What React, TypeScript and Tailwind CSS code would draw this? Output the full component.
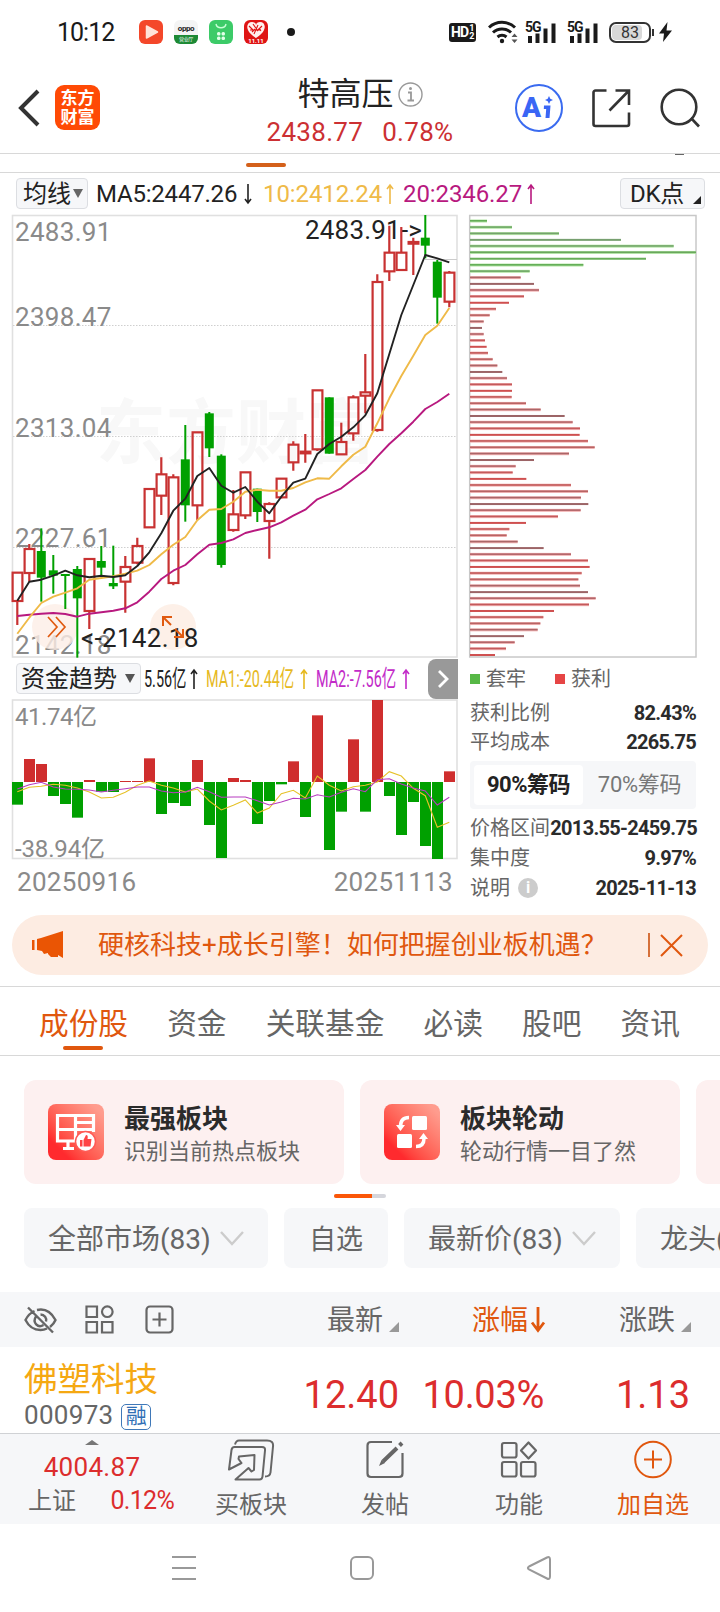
import type { ReactNode } from "react";
import { clsx } from "clsx";

// kind, body top, body bottom, wick top, wick bottom (in thirds of a pixel)
type Candle = ["r" | "g", number, number, number, number];

const CANDLES: Candle[] = [
  ["r", 1103, 1188, 1103, 1260],
  ["r", 1032, 1104, 1017, 1130],
  ["g", 1038, 1118, 970, 1190],
  ["g", 1096, 1112, 1050, 1166],
  ["g", 1107, 1112, 1107, 1212],
  ["g", 1092, 1180, 1083, 1358],
  ["r", 1062, 1218, 1062, 1272],
  ["g", 1068, 1088, 1023, 1112],
  ["g", 1134, 1144, 1022, 1152],
  ["r", 1086, 1130, 1053, 1223],
  ["r", 1023, 1073, 998, 1078],
  ["r", 852, 967, 852, 967],
  ["r", 808, 872, 757, 930],
  ["r", 817, 1134, 808, 1141],
  ["g", 763, 901, 660, 950],
  ["r", 682, 901, 682, 945],
  ["g", 625, 730, 621, 756],
  ["g", 752, 1080, 748, 1088],
  ["r", 928, 975, 855, 980],
  ["r", 802, 931, 802, 942],
  ["g", 851, 921, 851, 951],
  ["r", 897, 948, 892, 1061],
  ["r", 821, 877, 821, 880],
  ["r", 719, 772, 709, 797],
  ["r", 740, 745, 687, 773],
  ["r", 556, 733, 556, 738],
  ["g", 577, 746, 577, 746],
  ["r", 711, 748, 653, 748],
  ["r", 577, 685, 571, 707],
  ["r", 562, 572, 447, 625],
  ["r", 231, 675, 208, 680],
  ["r", 143, 199, 62, 228],
  ["r", 143, 195, 66, 195],
  ["r", 111, 116, 98, 210],
  ["g", 98, 122, 30, 160],
  ["g", 170, 278, 165, 356],
  ["r", 203, 290, 198, 307],
];

const MA5 = [1187, 1130, 1124, 1112, 1097, 1111, 1117, 1112, 1116, 1111, 1083, 1042, 985, 917, 881, 813, 789, 842, 863, 846, 890, 925, 875, 833, 821, 747, 717, 695, 667, 631, 565, 447, 330, 240, 150, 160, 172];
const MA10 = [1286, 1238, 1194, 1175, 1163, 1150, 1124, 1119, 1114, 1106, 1097, 1080, 1048, 1019, 996, 946, 914, 912, 890, 860, 854, 857, 857, 849, 832, 820, 821, 784, 749, 725, 655, 580, 513, 452, 390, 362, 309];
const MA20 = [1233, 1229, 1226, 1224, 1227, 1235, 1226, 1222, 1217, 1210, 1192, 1160, 1122, 1097, 1080, 1048, 1019, 1014, 1003, 984, 975, 967, 952, 932, 914, 883, 867, 850, 822, 795, 755, 717, 685, 650, 612, 591, 566];

const FLOW = [449, 312, 327, 423, 447, 488, 375, 410, 411, 378, 378, 310, 477, 444, 453, 315, 510, 609, 369, 375, 507, 438, 388, 319, 486, 181, 585, 470, 253, 470, 135, 423, 540, 441, 573, 612, 349];
const FLOW_MA1 = [410, 397, 394, 388, 391, 399, 411, 429, 427, 412, 391, 378, 391, 399, 411, 402, 438, 465, 451, 435, 474, 459, 416, 406, 429, 363, 391, 408, 395, 391, 381, 350, 363, 400, 422, 517, 502];
const FLOW_MA2 = [402, 389, 382, 396, 402, 403, 405, 411, 406, 401, 396, 396, 408, 413, 411, 397, 410, 427, 426, 426, 437, 450, 441, 430, 432, 419, 426, 412, 401, 410, 374, 371, 387, 399, 408, 450, 427];

const CHIPS = [81, 156, 297, 483, 641, 708, 558, 370, 209, 182, 222, 237, 192, 147, 108, 89, 71, 66, 71, 75, 80, 84, 98, 112, 127, 141, 156, 156, 155, 198, 242, 314, 338, 360, 359, 384, 404, 327, 222, 167, 158, 199, 333, 384, 363, 385, 362, 294, 198, 148, 140, 173, 251, 333, 384, 389, 365, 355, 360, 384, 407, 387, 282, 250, 241, 233, 192, 164, 138, 105];
const CHIP_REDS = ["#c25a5a", "#b86464", "#ab6668", "#9c6466", "#b3666a", "#c45a5c", "#cf5050"];
const CHIP_GREENS = ["#63ad57", "#6fa866", "#74a36c", "#77a070", "#72a669", "#6aa75d", "#66ad58"];

const RED = "#c83232";
const GREEN = "#00a000";

const cx = (i: number) => 17.3 + i * 12;
const ky = (v: number) => v / 3 - 9;
const fy = (v: number) => v / 3 - 44;
const points = (values: number[], y: (v: number) => number) =>
  values.map((v, i) => `${cx(i).toFixed(1)},${y(v).toFixed(1)}`).join(" ");

function KLineChart() {
  return (
    <svg width="460" height="444" viewBox="0 0 460 444" className="block" fontSize="26">
      <text x="96" y="244" fontSize="70" fontWeight="700" fill="#f8f8f8">东方财富</text>
      <rect x="12.5" y="1.5" width="444.5" height="441.5" fill="none" stroke="#e0e0e0" strokeWidth="1.6" />
      {[111.5, 222.5, 333.5].map((y) => (
        <line key={y} x1="13" x2="457" y1={y} y2={y} stroke="#cfcfcf" strokeDasharray="1.5 1.5" />
      ))}
      <line x1="425" x2="457" y1="45.5" y2="45.5" stroke="#ccc" />
      <g fill="#8a8a8a" letterSpacing="0.3">
        <text x="15" y="27">2483.91</text>
        <text x="15" y="112">2398.47</text>
        <text x="15" y="223">2313.04</text>
        <text x="15" y="333">2227.61</text>
        <text x="15" y="440">2142.18</text>
      </g>
      <circle cx="55" cy="413" r="23" fill="#fdeee6" fillOpacity="0.8" />
      <circle cx="173" cy="413" r="23" fill="#fdeee6" fillOpacity="0.9" />
      <text x="305" y="25" fill="#222" letterSpacing="0.2">2483.91-&gt;</text>
      <text x="81" y="432.5" fill="#222" letterSpacing="0.3">&lt;-2142.18</text>
      {CANDLES.map(([kind, top, bottom, high, low], i) => {
        const x = cx(i);
        if (kind === "g") {
          return (
            <g key={i} fill={GREEN}>
              <rect x={x - 1} y={ky(high)} width="2" height={(low - high) / 3} />
              <rect x={x - 4.5} y={ky(top)} width="9" height={Math.max(2, (bottom - top) / 3)} />
            </g>
          );
        }
        return (
          <g key={i} stroke={RED} strokeWidth="2.2">
            <path d={`M${x} ${ky(high)}V${ky(top)}M${x} ${ky(bottom)}V${ky(low)}`} />
            <rect x={x - 4.7} y={ky(top)} width="9.8" height={(bottom - top) / 3} fill="none" />
          </g>
        );
      })}
      <g fill="none" strokeWidth="1.9" strokeLinejoin="round">
        <polyline points={points(MA20, ky)} stroke="#b8197f" />
        <polyline points={points(MA10, ky)} stroke="#efba48" />
        <polyline points={points(MA5, ky)} stroke="#222" />
      </g>
      <path d="M48 403l9 10-9 10M56 403l9 10-9 10" fill="none" stroke="#e05a10" strokeWidth="1.7" />
      <path d="M163 412v-9h9M163 403l8 8M183 415v8h-9M183 423l-8-8" fill="none" stroke="#e05a10" strokeWidth="2" />
    </svg>
  );
}

function FlowChart() {
  const zero = fy(381);
  return (
    <svg width="460" height="161" viewBox="0 0 460 161" className="block" fontSize="24">
      <rect x="12.5" y="1" width="444.5" height="158.5" fill="none" stroke="#e0e0e0" strokeWidth="1.6" />
      <g fill="#8a8a8a">
        <text x="15" y="26" textLength="82">41.74亿</text>
        <text x="15" y="158" textLength="90">-38.94亿</text>
      </g>
      {FLOW.map((v, i) => (
        <rect
          key={i}
          x={12 + i * 12}
          y={Math.min(zero, fy(v))}
          width="11"
          height={Math.max(1, Math.abs(fy(v) - zero))}
          fill={v < 381 ? "#cf2e2e" : GREEN}
        />
      ))}
      <polyline points={points(FLOW_MA1, fy)} fill="none" stroke="#e6c229" strokeWidth="1.1" />
      <polyline points={points(FLOW_MA2, fy)} fill="none" stroke="#b73cc0" strokeWidth="1.1" />
    </svg>
  );
}

function ChipChart() {
  return (
    <svg width="230" height="444" viewBox="0 0 230 444" className="block">
      <rect x="1.7" y="1.5" width="226.3" height="441.5" fill="none" stroke="#c8c8c8" strokeWidth="1.5" />
      {CHIPS.map((v, i) => {
        const y = 7 + i * 6.29;
        const w = (v - 30) / 3;
        const green = i < 9;
        const plain = i % 7 === 3 || i % 7 === 6;
        return (
          <g key={i}>
            {!plain && <rect x="2" y={y - 1.5} width={w} height="3" fill={green ? "#b6e6a8" : "#f3b4b4"} />}
            <rect x="2" y={y - 1} width={w} height={plain ? 2 : 1.6} fill={(green ? CHIP_GREENS : CHIP_REDS)[i % 7]} />
          </g>
        );
      })}
    </svg>
  );
}

function VArrow({ down, className }: { down?: boolean; className?: string }) {
  return (
    <svg width="10" height="22" viewBox="0 0 10 22" fill="none" stroke="currentColor" strokeWidth="1.6" className={clsx("shrink-0", className)}>
      <path d={down ? "M5 1v19M2 16l3 4 3-4" : "M5 21V2M2 6l3-4 3 4"} />
    </svg>
  );
}

function Signal() {
  return (
    <div className="relative w-[31px] h-[23px]">
      <span className="absolute left-0 -top-[1px] text-[14px] leading-none font-bold tracking-[-1px]">5G</span>
      <svg width="31" height="23" viewBox="0 0 31 23" fill="#1a1a1a">
        <path d="M3 15h4v7H3zM10.500 12.500h4v9.500h-4zM18.500 7.500h4v14.500h-4zM26.500 2.500h4v19.500h-4z" />
      </svg>
    </div>
  );
}

function StatusBar() {
  return (
    <div className="h-[62px] flex items-center text-[#1a1a1a] pt-0.5">
      <span className="ml-[57px] w-[82px] text-[25px] leading-none tracking-[-1px]">10:12</span>
      <div className="flex gap-[11px]">
        <svg width="24" height="24" viewBox="0 0 24 24">
          <rect width="24" height="24" rx="6" fill="#f4472a" />
          <path d="M7.500 6v12l11-6z" fill="#ffe3da" stroke="#ffe3da" strokeWidth="1.5" strokeLinejoin="round" />
        </svg>
        <div className="w-6 h-6 rounded-md overflow-hidden bg-[#f4f4f4] flex flex-col justify-between text-center">
          <span className="mt-[5px] text-[8px] leading-none font-bold tracking-tighter text-[#222]">oppo</span>
          <span className="h-[9px] bg-[#1d8a35] text-white text-[5px] leading-[9px] tracking-[-0.3px] whitespace-nowrap">营业厅</span>
        </div>
        <svg width="24" height="24" viewBox="0 0 24 24">
          <rect width="24" height="24" rx="6" fill="#3ccb68" />
          <path d="M7 4c1 5 9 5 10 0" fill="none" stroke="#c8ffd6" strokeWidth="1.4" />
          <g fill="#e2ffe9">
            <rect x="8" y="12" width="3.5" height="3.5" rx="1.5" />
            <rect x="12.5" y="12" width="3.5" height="3.5" rx="1.5" />
            <rect x="8" y="16.5" width="3.5" height="3.5" rx="1.5" />
            <rect x="12.5" y="16.5" width="3.5" height="3.5" rx="1.5" />
          </g>
        </svg>
        <div className="relative w-6 h-6 rounded-md overflow-hidden bg-[#df1414]">
          <svg width="24" height="24" viewBox="0 0 24 24">
            <path d="M12 18C0 11 2 2 8 2c2 0 4 1 4 3 0-2 2-3 4-3 6 0 8 9-4 16z" fill="#fff0ee" />
            <path d="M5 6l4 4M9 4l5 7M14 5l-4 9M18 6l-5 5M6 10h11M8 12l3-3M15 8l2 3" stroke="#df1414" strokeWidth="1.1" />
          </svg>
          <span className="absolute inset-x-0 bottom-0 text-[6px] leading-none text-white text-center font-bold">11.11</span>
        </div>
      </div>
      <span className="ml-[19px] w-2 h-2 rounded-full bg-[#1a1a1a]" />
      <div className="ml-auto mr-[48px] flex items-center">
        <div className="w-[27px] h-[19px] rounded-[3px] bg-[#1a1a1a] text-white flex items-center pl-0.5 font-bold">
          <span className="text-[14px] leading-none tracking-[-0.9px]">HD</span>
          <span className="flex flex-col text-[9px] leading-[8px] pl-px">
            <span>1</span>
            <span>2</span>
          </span>
        </div>
        <svg width="31" height="24" viewBox="0 0 31 24" className="ml-3" fill="none" stroke="#1a1a1a" strokeWidth="3">
          <path d="M1 7.500a19 19 0 0 1 26 0M5 12.500a13 13 0 0 1 18 0M9.500 17a7 7 0 0 1 9 0" />
          <circle cx="14" cy="21" r="2.2" fill="#1a1a1a" stroke="none" />
          <path d="M23.500 17l3-3.500 3 3.500zM23.500 19.500l3 3.500 3-3.500z" fill="#555" stroke="none" />
        </svg>
        <div className="ml-[6px]">
          <Signal />
        </div>
        <div className="ml-[11px]">
          <Signal />
        </div>
        <div className="ml-[11px] relative w-[42px] h-[21px] rounded-[7px] border-2 border-[#333] p-px text-[#333] text-[16px] leading-[16px] text-center">
          <div className="h-full w-[30px] rounded-[4px] bg-[#d8d8d8] pl-1.5">83</div>
        </div>
        <span className="w-[2px] h-[7px] bg-[#333] ml-[1px]" />
        <svg width="13" height="20" viewBox="0 0 13 20" className="ml-[5px]" fill="#1a1a1a">
          <path d="M8.500 0L0 11.500h5L4 20l9-11.500H7.500z" />
        </svg>
      </div>
    </div>
  );
}

function Header() {
  return (
    <div className="h-[91px] flex items-center relative">
      <svg width="23" height="38" viewBox="0 0 23 38" className="ml-[17px]" fill="none" stroke="#333" strokeWidth="4">
        <path d="M21 2L4 19l17 17" />
      </svg>
      <div className="ml-[15px] w-[45px] h-[45px] rounded-[9px] bg-[#ff4a05] text-white font-bold text-[17px] leading-[19px] flex flex-col items-center justify-center">
        <span>东方</span>
        <span>财富</span>
      </div>
      <div className="absolute left-[254px] w-[212px] top-[13px] text-center">
        <div className="flex items-center justify-center text-[32px] leading-[38px] text-[#222] whitespace-nowrap">
          <span>特高压</span>
          <svg width="25" height="25" viewBox="0 0 25 25" className="ml-1" fill="none" stroke="#999">
            <circle cx="12.5" cy="12.5" r="11.5" strokeWidth="1.4" />
            <path d="M10 10.500h3v8M9.500 18.500h6.500" strokeWidth="1.8" />
            <circle cx="12.5" cy="6.5" r="1.5" fill="#999" stroke="none" />
          </svg>
        </div>
        <div className="mt-1 flex justify-center gap-[19px] text-[26px] leading-[30px] text-[#cc3033] tracking-[0.3px]">
          <span>2438.77</span>
          <span>0.78%</span>
        </div>
      </div>
      <div className="ml-auto mr-[19px] flex items-center">
        <div className="w-12 h-12 rounded-full border-2 border-[#3a6bf0] text-[#3a66f5] flex items-center justify-center font-black text-[28px] leading-none pr-0.5">
          A
          <svg width="11" height="23" viewBox="0 0 11 23" className="ml-0.5" fill="currentColor">
            <path d="M1 9.500h6.500L6.500 22H2.500l.7-9H.8zM6 0l1.300 2.700L10 4 7.300 5.300 6 8 4.700 5.300 2 4l2.700-1.300z" />
          </svg>
        </div>
        <svg width="40" height="40" viewBox="0 0 40 40" className="ml-[28px]" fill="none" stroke="#333" strokeWidth="2.6">
          <path d="M15.500 2.500H4.500a2 2 0 0 0-2 2V36a2 2 0 0 0 2 2H36a2 2 0 0 0 2-2V24.500M24.500 2.500H38v14.500M38 2.500L18.500 22.500" />
        </svg>
        <svg width="41" height="40" viewBox="0 0 41 40" className="ml-[29px]" fill="none" stroke="#333" strokeWidth="2.6">
          <circle cx="19" cy="19" r="17.3" />
          <path d="M31 30l8 8.500" />
        </svg>
      </div>
    </div>
  );
}

function IndicatorBar() {
  return (
    <div className="h-[41px] flex items-center text-2xl leading-none text-[#222] whitespace-nowrap">
      <div className="ml-4 w-[72px] h-[31px] rounded border border-[#dcdee2] bg-[#f6f7f9] flex items-center pl-[6px]">
        均线
        <svg width="10" height="9" viewBox="0 0 10 9" className="ml-0.5" fill="#666">
          <path d="M0 0h10L5 9z" />
        </svg>
      </div>
      <span className="ml-2 w-[147px] tracking-[-0.2px]">MA5:2447.26</span>
      <VArrow down />
      <span className="ml-[10px] w-[122px] tracking-[-0.1px] text-[#efba48]">10:2412.24</span>
      <VArrow className="text-[#efba48]" />
      <span className="ml-2 w-[123px] tracking-[-0.1px] text-[#b8197f]">20:2346.27</span>
      <VArrow className="text-[#b8197f]" />
      <div className="ml-auto mr-[15px] w-[85px] h-[31px] rounded border border-[#dcdee2] bg-[#f6f7f9] flex items-center pl-[9px] tracking-[-0.3px]">
        DK点
        <svg width="8" height="8" viewBox="0 0 8 8" className="ml-auto mr-[3px] mt-3" fill="#222">
          <path d="M8 0v8H0z" />
        </svg>
      </div>
    </div>
  );
}

function Squeezed({ className, children }: { className: string; children: ReactNode }) {
  return (
    <span className={clsx("shrink-0", className)}>
      <span className="inline-block origin-left scale-x-[0.6]">{children}</span>
    </span>
  );
}

function FlowBar() {
  return (
    <div className="h-[41px] flex items-center text-2xl leading-none text-[#222] whitespace-nowrap overflow-hidden">
      <div className="ml-4 w-[125px] h-[31px] shrink-0 rounded border border-[#dcdee2] bg-[#f6f7f9] flex items-center pl-1">
        资金趋势
        <svg width="10" height="9" viewBox="0 0 10 9" className="ml-2" fill="#555">
          <path d="M0 0h10L5 9z" />
        </svg>
      </div>
      <Squeezed className="ml-[3px] w-[45px]">5.56亿</Squeezed>
      <VArrow />
      <Squeezed className="ml-[7px] w-[93px] text-[#e6b91e]">MA1:-20.44亿</Squeezed>
      <VArrow className="text-[#e6b91e]" />
      <Squeezed className="ml-[7px] w-[85px] text-[#c22bc8]">MA2:-7.56亿</Squeezed>
      <VArrow className="text-[#c22bc8]" />
      <div className="ml-auto mr-[2px] w-[30px] h-10 shrink-0 rounded-l-lg bg-[#999] flex items-center justify-center">
        <svg width="12" height="20" viewBox="0 0 12 20" fill="none" stroke="#fff" strokeWidth="2.8">
          <path d="M2 2l8 8-8 8" />
        </svg>
      </div>
    </div>
  );
}

function StatRow({ label, value, className }: { label: ReactNode; value: string; className: string }) {
  return (
    <div className={clsx("flex items-center justify-between text-xl leading-none whitespace-nowrap text-[#666]", className)}>
      <span className="flex items-center">{label}</span>
      <span className="font-bold text-[#2b2b2b] tracking-[-0.7px]">{value}</span>
    </div>
  );
}

function ChipPanel() {
  return (
    <div className="w-[260px]">
      <div className="pl-2">
        <ChipChart />
      </div>
      <div className="pl-[10px] pr-6">
        <div className="h-[41px] flex items-center text-xl leading-none text-[#666]">
          <span className="w-[10px] h-[10px] bg-[#57b846] mr-1.5" />
          <span className="w-[69px]">套牢</span>
          <span className="w-[10px] h-[10px] bg-[#e64545] mr-1.5" />
          获利
        </div>
        <StatRow label="获利比例" value="82.43%" className="h-[28px]" />
        <StatRow label="平均成本" value="2265.75" className="h-[30px]" />
        <div className="mt-1 h-12 rounded bg-[#f6f7f9] p-1 flex text-[22px] leading-10 text-center">
          <span className="w-[109px] rounded bg-white font-bold text-[#222] whitespace-nowrap tracking-[-0.5px]">90%筹码</span>
          <span className="flex-1 pl-1 text-[#777] whitespace-nowrap tracking-[-0.3px]">70%筹码</span>
        </div>
        <StatRow label="价格区间" value="2013.55-2459.75" className="h-[30px] mt-1 -mr-px" />
        <StatRow label="集中度" value="9.97%" className="h-[30px]" />
        <StatRow
          label={
            <>
              说明
              <span className="ml-2 w-5 h-5 rounded-full bg-[#ccc] text-white text-base leading-5 font-bold text-center">i</span>
            </>
          }
          value="2025-11-13"
          className="h-[30px]"
        />
      </div>
    </div>
  );
}

function Banner() {
  return (
    <div className="mx-3 mt-3 h-[60px] rounded-full bg-[#fdece2] flex items-center text-[#e0570e]">
      <svg width="31" height="28" viewBox="0 0 31 28" className="ml-5 shrink-0" fill="#ea5504">
        <path d="M0 9h2.500v10H0zM5 8l4-1L31 0v27l-5-3v2h-7l-3-3v-1l-4 1-2-3-5-1z" />
      </svg>
      <span className="ml-[35px] w-[550px] text-[26px] leading-none whitespace-nowrap">硬核科技+成长引擎！如何把握创业板机遇？</span>
      <span className="w-[1.5px] h-6 bg-[#d5703a]" />
      <svg width="23" height="23" viewBox="0 0 23 23" className="ml-[10px]" fill="none" stroke="currentColor" strokeWidth="2">
        <path d="M1 1l21 21M22 1L1 22" />
      </svg>
    </div>
  );
}

const TABS = ["成份股", "资金", "关联基金", "必读", "股吧", "资讯"];

function Tabs() {
  return (
    <div className="mt-[11px] h-[70px] border-y border-[#d8d8d8] flex justify-between pl-[39px] pr-[40px] text-[29.7px] leading-none text-[#666]">
      {TABS.map((tab, i) => (
        <div key={tab} className={clsx("pt-[22px] flex flex-col items-center whitespace-nowrap", i === 0 && "text-[#e0570e]")}>
          {tab}
          {i === 0 && <span className="mt-[7px] mr-px w-10 h-1 rounded-full bg-[#e0570e]" />}
        </div>
      ))}
    </div>
  );
}

function FeatureCard({ title, desc, children }: { title?: string; desc?: string; children?: ReactNode }) {
  return (
    <div className="w-[320px] h-[104px] shrink-0 rounded-xl bg-[#fdf0f0] flex items-center pl-6">
      <div className="w-14 h-14 rounded-lg bg-linear-to-tr from-[#ff2a2e] from-20% to-[#ff9c8e] to-90%">{children}</div>
      <div className="ml-5 pt-1 whitespace-nowrap leading-none">
        <p className="text-[26px] font-bold text-[#2b2b2b]">{title}</p>
        <p className="mt-[9px] text-[22px] text-[#666]">{desc}</p>
      </div>
    </div>
  );
}

function FeatureCards() {
  return (
    <div className="pt-6 pl-6 flex gap-4 overflow-hidden">
      <FeatureCard title="最强板块" desc="识别当前热点板块">
        <svg width="56" height="56" viewBox="0 0 56 56" fill="none" stroke="#fff" strokeWidth="3.2">
          <path d="M27 37H9.500V11.500H45.500V28M27.500 11v26M10 25.500h35M29 18.500h16M15 44.500h11M20 37v7" />
          <circle cx="37.5" cy="37.5" r="10" fill="#fff" stroke="#ff5a55" strokeWidth="1.5" />
          <path d="M32 36h2.500v6.500H32zM35.500 36l2.500-5c2 0 2 2 1.500 4h4l-1 7.500h-7z" fill="#ff4444" stroke="none" />
        </svg>
      </FeatureCard>
      <FeatureCard title="板块轮动" desc="轮动行情一目了然">
        <svg width="56" height="56" viewBox="0 0 56 56" fill="#fff">
          <rect x="28" y="12" width="15" height="14" rx="1.5" />
          <rect x="13" y="30" width="15" height="14" rx="1.5" />
          <path d="M25 13.500c-6 0-8.500 3-8.500 9M32 42.500c6 0 8-3 8-8" fill="none" stroke="#fff" strokeWidth="3.5" />
          <path d="M12 21h9l-4.500 6zM35 35h9l-4.500-6z" />
        </svg>
      </FeatureCard>
      <FeatureCard />
    </div>
  );
}

function Chevron() {
  return (
    <svg width="24" height="15" viewBox="0 0 24 15" className="ml-[9px] -mt-1" fill="none" stroke="#ccc" strokeWidth="2.4">
      <path d="M1 1l11 12L23 1" />
    </svg>
  );
}

function Filters() {
  const chip = "h-[60px] pt-1 shrink-0 rounded-lg bg-[#f6f7f9] flex items-center whitespace-nowrap";
  return (
    <div className="mt-[10px] pl-6 flex gap-4 overflow-hidden text-[28px] leading-none text-[#666]">
      <div className={clsx(chip, "w-[244px] pl-6")}>
        全部市场(83)
        <Chevron />
      </div>
      <div className={clsx(chip, "w-[104px] justify-center text-[27px]")}>自选</div>
      <div className={clsx(chip, "w-[216px] pl-6")}>
        最新价(83)
        <Chevron />
      </div>
      <div className={clsx(chip, "w-[216px] pl-6")}>龙头(83)</div>
    </div>
  );
}

function Corner() {
  return (
    <svg width="10" height="10" viewBox="0 0 10 10" className="ml-[6px] mt-[15px]" fill="#999">
      <path d="M10 0v10H0z" />
    </svg>
  );
}

function StockTable() {
  return (
    <>
      <div className="mt-6 h-[55px] bg-[#f6f7f9] flex items-center text-[28px] leading-none text-[#666] whitespace-nowrap">
        <div className="w-[290px] pl-6 flex items-center">
          <svg width="33" height="28" viewBox="0 0 33 28" fill="none" stroke="#666" strokeWidth="2.4">
            <path d="M10.500 5C6 7 3 11 1.500 14c3 6 8 10 15 10 2.500 0 4.500-.5 6.500-1.500M13 4c9-2 15 3.500 18.500 10-1 2.500-3 5-5.500 7M12 10.500c-4 6 2 12 7.500 8.500M16.500 8.500c4 0 6.500 3.500 5.500 7M4 1.500l25 25" />
          </svg>
          <svg width="29" height="29" viewBox="0 0 29 29" className="ml-[28px]" fill="none" stroke="#666" strokeWidth="2.2">
            <path d="M1.500 1.500h10.500v10.500H1.500zM1.500 17h10.500v10.500H1.500zM17 17h10.500v10.500H17z" />
            <circle cx="22.3" cy="6.7" r="5.3" />
          </svg>
          <svg width="29" height="29" viewBox="0 0 29 29" className="ml-[31px]" fill="none" stroke="#666" strokeWidth="2.2">
            <rect x="1.5" y="1.5" width="26" height="26" rx="3.5" />
            <path d="M7.500 14.500h14M14.500 7.500v14" />
          </svg>
        </div>
        <div className="w-[109px] pt-[3px] flex justify-end">
          最新
          <Corner />
        </div>
        <div className="w-[147px] pt-[3px] flex justify-end text-[#e0570e]">
          涨幅
          <svg width="16" height="26" viewBox="0 0 16 26" className="ml-0.5" fill="none" stroke="currentColor" strokeWidth="2.8">
            <path d="M8 0v23M2 15.500l6 8 6-8" />
          </svg>
        </div>
        <div className="w-[145px] pt-[3px] flex justify-end">
          涨跌
          <Corner />
        </div>
      </div>
      <div className="h-[86px] flex items-center text-[38px] leading-none text-[#dc2d2d]">
        <div className="w-[200px] pl-6 pt-2.5">
          <p className="text-[33.5px] leading-[40px] text-[#f5a812] whitespace-nowrap">佛塑科技</p>
          <div className="flex items-center text-[26px] leading-[30px] tracking-[0.3px] text-[#666]">
            000973
            <span className="ml-2 mt-1 w-[30px] h-[26px] rounded-[5px] border-[1.5px] border-[#3f78b8] text-[#2f6eb5] text-[21px] leading-[23px] flex justify-center">融</span>
          </div>
        </div>
        <span className="w-[199px] pt-2.5 text-right">12.40</span>
        <span className="w-[145px] pt-2.5 text-right tracking-[-0.3px]">10.03%</span>
        <span className="w-[146px] pt-2.5 text-right">1.13</span>
      </div>
    </>
  );
}

function Action({ label, className, children }: { label: string; className: string; children: ReactNode }) {
  return (
    <div className={clsx("flex flex-col items-center text-2xl leading-none whitespace-nowrap", className)}>
      <div className="h-[52px] pt-[5px] flex items-start">{children}</div>
      <span className="mt-[7px]">{label}</span>
    </div>
  );
}

function BottomBar() {
  return (
    <div className="h-[91px] border-t border-[#d0d2d5] bg-[#f6f7f9] flex text-[#666]">
      <div className="w-[184px] flex flex-col items-center">
        <svg width="14" height="5" viewBox="0 0 14 5" className="mt-1.5" fill="#777">
          <path d="M7 0l7 5H0z" />
        </svg>
        <span className="mt-[9px] text-[26px] leading-[26px] tracking-[0.3px] text-[#dc2d2d]">4004.87</span>
        <div className="w-full pl-7 pr-[10px] mt-[9px] flex items-center justify-between text-2xl leading-none">
          <span>上证</span>
          <span className="text-[25px] text-[#dc2d2d] tracking-[-0.7px] -mt-0.5">0.12%</span>
        </div>
      </div>
      <Action label="买板块" className="w-[134px]">
        <svg width="47" height="43" viewBox="0 0 47 43" fill="none" stroke="#666" strokeWidth="2" strokeLinejoin="round">
          <path d="M7 5.500c.8-3 1.500-4 4-4h28c4.500 0 6.500 2 6 6l-2.500 26c-.3 2.500-2 4-5.500 4" />
          <path d="M1 30.500L3.500 11c.3-2 1-3 3-3h27.500c2.500 0 3.300 1 3 3.500l-2.500 26c-.2 2-1 3-3 3H7.500L20.500 29l3 3.500 2.500-1.500.5-15-15.500 1.500-.5 2.500 3 4z" />
        </svg>
      </Action>
      <Action label="发帖" className="w-[134px]">
        <svg width="40" height="40" viewBox="0 0 40 40" fill="none" stroke="#666" strokeWidth="2.2">
          <path d="M27 3H6C3.500 3 2.500 4 2.500 6.500v28C2.500 37 3.500 38 6 38h28c2.500 0 3.500-1 3.500-3.500V14" />
          <path d="M37 4l-2.500 2.500M32 9L18 22.500" strokeWidth="4" />
          <path d="M14 27l2.500-6 3.500 3z" fill="#666" stroke="none" />
        </svg>
      </Action>
      <Action label="功能" className="w-[134px]">
        <svg width="38" height="39" viewBox="0 0 38 39" fill="none" stroke="#666" strokeWidth="2.2">
          <rect x="2" y="4" width="14.5" height="14.5" rx="2" />
          <rect x="2" y="23" width="14.5" height="14.5" rx="2" />
          <rect x="21" y="23" width="14.5" height="14.5" rx="2" />
          <path d="M28.500 3.500l7.500 8-7.500 8-7.500-8z" strokeLinejoin="round" />
        </svg>
      </Action>
      <Action label="加自选" className="w-[134px] text-[#e0570e]">
        <svg width="40" height="42" viewBox="0 0 40 42" fill="none" stroke="currentColor" strokeWidth="2">
          <circle cx="20" cy="20.5" r="17.8" />
          <path d="M11 20.500h18M20 11.500v18" />
        </svg>
      </Action>
    </div>
  );
}

export default function App() {
  return (
    <div className="w-[720px] h-[1612px] overflow-hidden bg-white font-['Roboto','Noto_Sans_CJK_SC',sans-serif]">
      <StatusBar />
      <Header />
      <div className="h-[20px] border-y border-[#d8d8d8] flex items-start justify-between">
        <span className="ml-[246px] mt-[9px] w-10 h-1 rounded-full bg-[#d4601a]" />
        <span className="mr-[36px] w-[9px] h-px bg-[#666]" />
      </div>
      <IndicatorBar />
      <div className="flex">
        <div className="w-[460px]">
          <KLineChart />
          <FlowBar />
          <FlowChart />
          <div className="h-[43px] flex items-center justify-between pl-[17px] pr-[7px] text-[26px] leading-none tracking-[0.3px] text-[#8a8a8a]">
            <span>20250916</span>
            <span>20251113</span>
          </div>
        </div>
        <ChipPanel />
      </div>
      <Banner />
      <Tabs />
      <FeatureCards />
      <div className="mt-[10px] mx-auto w-[52px] h-1 rounded-full bg-[#d5d6dc] overflow-hidden">
        <div className="w-[38px] h-full bg-[#fb5607]" />
      </div>
      <Filters />
      <StockTable />
      <BottomBar />
      <div className="h-[88px] pt-[31px] pl-[171px]">
        <svg width="380" height="26" viewBox="0 0 380 26" fill="none" stroke="#999" strokeWidth="2">
          <path d="M1 2h24M1 13h24M1 24h24" />
          <rect x="180" y="2" width="22" height="22" rx="5" />
          <path d="M358 11.500L376 2.500c2-1 3 0 3 2v17c0 2-1 3-3 2L358 14.500c-1.500-1-1.500-2 0-3z" />
        </svg>
      </div>
    </div>
  );
}
